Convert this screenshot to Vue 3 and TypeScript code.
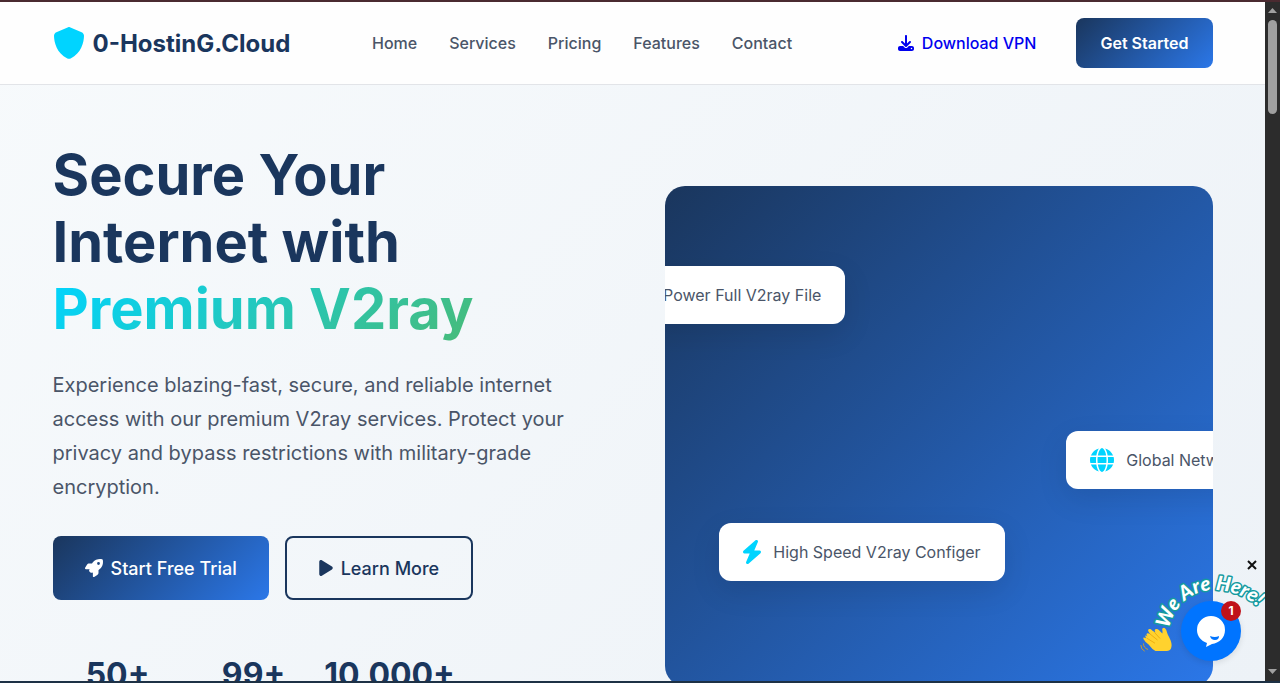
<script setup lang="ts">
interface NavLink {
  label: string
  href: string
}

const links: NavLink[] = [
  { label: 'Home', href: '#home' },
  { label: 'Services', href: '#services' },
  { label: 'Pricing', href: '#pricing' },
  { label: 'Features', href: '#features' },
  { label: 'Contact', href: '#contact' },
]

const stats: string[] = ['50+', '99+', '10,000+']
</script>

<template>
  <div class="window">
    <div class="edge edge-top"></div>
    <div class="viewport">
      <div class="page">
        <header class="header">
          <div class="container header-row">
            <a class="logo" href="#home">
              <svg class="logo-icon" viewBox="0 0 512 512" aria-hidden="true">
                <path d="M256 0c4.6 0 9.2 1 13.4 2.9L457.7 82.8c22 9.3 38.4 31 38.3 57.2c-.5 99.2-41.3 280.7-213.6 363.2c-16.7 8-36.1 8-52.8 0C57.3 420.7 16.5 239.2 16 140c-.1-26.2 16.3-47.9 38.3-57.2L242.7 2.9C246.8 1 251.4 0 256 0z" />
              </svg>
              <span>0-HostinG.Cloud</span>
            </a>
            <nav class="nav">
              <a v-for="link in links" :key="link.label" :href="link.href">{{ link.label }}</a>
            </nav>
            <div class="actions">
              <a class="download" href="#download">
                <svg viewBox="0 0 512 512" aria-hidden="true">
                  <path d="M288 32c0-17.7-14.3-32-32-32s-32 14.3-32 32V274.7l-73.4-73.4c-12.5-12.5-32.8-12.5-45.3 0s-12.5 32.8 0 45.3l128 128c12.5 12.5 32.8 12.5 45.3 0l128-128c12.5-12.5 12.5-32.8 0-45.3s-32.8-12.5-45.3 0L288 274.7V32zM64 352c-35.3 0-64 28.7-64 64v32c0 35.3 28.7 64 64 64H448c35.3 0 64-28.7 64-64V416c0-35.3-28.7-64-64-64H346.5l-45.3 45.3c-25 25-65.5 25-90.5 0L165.5 352H64zm368 56a24 24 0 1 1 0 48 24 24 0 1 1 0-48z" />
                </svg>
                <span>Download VPN</span>
              </a>
              <button class="get-started" type="button">Get Started</button>
            </div>
          </div>
        </header>

        <main class="hero">
          <div class="container hero-grid">
            <section class="copy">
              <h1>Secure Your Internet with <span class="highlight">Premium V2ray</span></h1>
              <p>
                Experience blazing-fast, secure, and reliable internet access with our premium V2ray
                services. Protect your privacy and bypass restrictions with military-grade encryption.
              </p>
              <div class="buttons">
                <button class="cta primary" type="button">
                  <svg class="rocket" viewBox="0 0 512 512" aria-hidden="true">
                    <path d="M156.6 384.9L125.7 354c-8.5-8.5-11.5-20.8-7.7-32.2c3-8.9 7-20.5 11.8-33.8L24 288c-8.6 0-16.6-4.6-20.9-12.1s-4.2-16.7 .2-24.1l52.5-88.5c13-21.9 36.5-35.3 61.9-35.3l82.3 0c2.4-4 4.8-7.7 7.2-11.3C289.1-4.1 411.1-8.1 483.9 5.3c11.6 2.1 20.6 11.2 22.8 22.8c13.4 72.9 9.3 194.8-111.4 276.7c-3.5 2.4-7.3 4.8-11.3 7.2v82.3c0 25.4-13.4 49-35.3 61.9l-88.5 52.5c-7.4 4.4-16.6 4.5-24.1 .2s-12.1-12.2-12.1-20.9V380.8c-14.1 4.9-26.4 8.9-35.7 11.9c-11.2 3.6-23.4 .5-31.8-7.8zM384 168a40 40 0 1 0 0-80 40 40 0 1 0 0 80z" />
                  </svg>
                  <span>Start Free Trial</span>
                </button>
                <button class="cta outline" type="button">
                  <svg class="play" viewBox="0 0 384 512" aria-hidden="true">
                    <path d="M73 39c-14.8-9.1-33.4-9.4-48.5-.9S0 62.6 0 80V432c0 17.4 9.4 33.4 24.5 41.9s33.7 8.1 48.5-.9L361 297c14.3-8.7 23-24.2 23-41s-8.7-32.2-23-41L73 39z" />
                  </svg>
                  <span>Learn More</span>
                </button>
              </div>
              <div class="stats">
                <strong v-for="value in stats" :key="value">{{ value }}</strong>
              </div>
            </section>

            <section class="visual">
              <div class="card card-file">Power Full V2ray File</div>
              <div class="card card-network">
                <svg class="globe" viewBox="0 0 512 512" aria-hidden="true">
                  <path d="M352 256c0 22.2-1.2 43.6-3.3 64H163.3c-2.2-20.4-3.3-41.8-3.3-64s1.2-43.6 3.3-64H348.7c2.2 20.4 3.3 41.8 3.3 64zm28.8-64H503.9c5.3 20.5 8.1 41.9 8.1 64s-2.8 43.5-8.1 64H380.8c2.1-20.6 3.2-42 3.2-64s-1.1-43.4-3.2-64zm112.6-32H376.7c-10-63.9-29.8-117.4-55.3-151.6c78.3 20.7 142 77.5 171.9 151.6zm-149.1 0H167.7c6.1-36.4 15.5-68.6 27-94.7c10.5-23.6 22.2-40.7 33.5-51.5C239.4 3.2 248.7 0 256 0s16.6 3.2 27.8 13.8c11.3 10.8 23 27.9 33.5 51.5c11.6 26 20.9 58.2 27 94.7zm-209 0H18.6C48.6 85.9 112.2 29.1 190.6 8.4C165.1 42.6 145.3 96.1 135.3 160zM8.1 192H131.2c-2.1 20.6-3.2 42-3.2 64s1.1 43.4 3.2 64H8.1C2.8 299.5 0 278.1 0 256s2.8-43.5 8.1-64zM194.7 446.6c-11.6-26-20.9-58.2-27-94.6H344.3c-6.1 36.4-15.5 68.6-27 94.6c-10.5 23.6-22.2 40.7-33.5 51.5C272.6 508.8 263.3 512 256 512s-16.6-3.2-27.8-13.8c-11.3-10.8-23-27.9-33.5-51.5zM135.3 352c10 63.9 29.8 117.4 55.3 151.6C112.2 482.9 48.6 426.1 18.6 352H135.3zm358.1 0c-30 74.1-93.6 130.9-171.9 151.6c25.5-34.2 45.2-87.7 55.3-151.6H493.4z" />
                </svg>
                <span>Global Network</span>
              </div>
              <div class="card card-speed">
                <svg class="bolt" viewBox="32 0 384 512" aria-hidden="true">
                  <path d="M349.4 44.6c5.9-13.7 1.5-29.7-10.6-38.5s-28.6-8-39.9 1.8l-256 224c-10 8.8-13.6 22.9-8.9 35.3S50.7 288 64 288H175.5L98.6 467.4c-5.9 13.7-1.5 29.7 10.6 38.5s28.6 8 39.9-1.8l256-224c10-8.8 13.6-22.9 8.9-35.3s-16.6-20.7-30-20.7H272.5L349.4 44.6z" />
                </svg>
                <span>High Speed V2ray Configer</span>
              </div>
            </section>
          </div>
        </main>

        <aside class="chat">
          <svg class="greeting" viewBox="0 0 128 112" role="img" aria-label="We Are Here!">
            <defs>
              <path id="greeting-arc" d="M32 73 C36 50 56 34 76 34 C98 34 114 43 128 58" />
            </defs>
            <text><textPath href="#greeting-arc">We Are Here!</textPath></text>
            <g class="hand" transform="translate(3 19) scale(0.86 0.8)">
              <path d="M9 77C6 74 8 71 12 74L10 71C8 67 12 66 15 70L18 72C15 67 20 66 23 70L26 73C27 69 24 67 28 66C31 67 31 72 33 76C36 82 38 87 36 92Q35 95 31 95H18Q14 93 10 87Q6 84 4 80Q3 77 7 79L6 76Q6 75 9 77Z" />
              <path class="finger" d="M12 74L20 81M17 72L23 79M8 79L17 85" />
              <path class="motion" d="M1 88Q1 93 5 95M4 86Q4 91 9 93" />
            </g>
          </svg>
          <button class="close" type="button" aria-label="Close">
            <svg viewBox="0 0 10 10" aria-hidden="true"><path d="M1 1L9 9M9 1L1 9" /></svg>
          </button>
          <button class="bubble" type="button" aria-label="Open chat">
            <svg viewBox="0 0 60 60" aria-hidden="true">
              <path d="M30 15a14 14 0 0 1 14 14c0 8-6 13-13 14l-6 3 1-4C20 40 16 35 16 29A14 14 0 0 1 30 15z" fill="#fff" />
              <path d="M29 35Q34 37 38 35Q38 39 34 39Q30 39 29 35Z" fill="#0074ff" />
            </svg>
          </button>
          <span class="badge">1</span>
        </aside>
      </div>

      <div class="scrollbar" aria-hidden="true">
        <svg viewBox="0 0 9 5"><path d="M4.500 0L9 5H0Z" /></svg>
        <div class="thumb"></div>
        <svg class="down" viewBox="0 0 9 5"><path d="M0 0H9L4.500 5Z" /></svg>
      </div>
    </div>
    <div class="edge edge-bottom"></div>
  </div>
</template>

<style>
body {
  margin: 0;
}
</style>

<style scoped>
.window {
  display: flex;
  flex-direction: column;
  height: 100vh;
  overflow: hidden;
  font-family: Inter, "Liberation Sans", sans-serif;
  color: #4a5568;
}

.window *,
.window *::before {
  box-sizing: border-box;
}

.edge {
  flex: 0 0 2px;
}

.edge-top {
  background: #4a2a30;
}

.edge-bottom {
  background: #1d3145;
}

.viewport {
  display: flex;
  flex: 1;
  min-height: 0;
}

.page {
  position: relative;
  flex: 1;
  min-width: 0;
  overflow: hidden;
  background: linear-gradient(135deg, #f7fafc 0%, #edf2f7 100%);
}

.container {
  max-width: 1200px;
  margin: 0 auto;
  padding: 0 20px;
}

a {
  text-decoration: none;
}

button {
  padding: 0;
  border: 0;
  font-family: inherit;
  cursor: pointer;
}

svg {
  display: block;
  flex: none;
  fill: currentColor;
}

.header {
  padding: 16px 0;
  background: #fefefe;
  border-bottom: 1px solid #e2e4e8;
}

.header-row {
  display: flex;
  align-items: center;
  justify-content: space-between;
}

.logo {
  display: flex;
  align-items: center;
  gap: 8px;
  font-size: 24px;
  font-weight: 700;
  color: #1a365d;
}

.logo-icon {
  width: 32px;
  height: 32px;
  color: #00d4ff;
}

.nav {
  display: flex;
  gap: 32px;
  font-size: 16px;
  font-weight: 500;
}

.nav a {
  color: #4a5568;
}

.actions {
  display: flex;
  align-items: center;
  gap: 16px;
  font-size: 16px;
}

.download {
  display: flex;
  align-items: center;
  gap: 8px;
  padding: 12px 24px;
  font-weight: 500;
  color: #0000ee;
}

.download svg {
  width: 16px;
  height: 16px;
}

.get-started {
  height: 50px;
  padding: 0 24px;
  border-radius: 8px;
  background: linear-gradient(135deg, #1a365d 0%, #2b77e8 100%);
  color: #fff;
  font-size: 16px;
  font-weight: 600;
}

.hero {
  padding: 57px 0;
}

.hero-grid {
  display: grid;
  grid-template-columns: 1fr 1fr;
  gap: 64px;
}

h1 {
  margin: 0 0 25px;
  font-size: 56px;
  font-weight: 700;
  line-height: 67px;
  color: #1a365d;
}

.highlight {
  background: linear-gradient(135deg, #00d4ff 0%, #48bb78 100%);
  background-clip: text;
  -webkit-background-clip: text;
  color: transparent;
}

p {
  margin: 0 0 32px;
  font-size: 20px;
  line-height: 34px;
}

.buttons {
  display: flex;
  gap: 16px;
  margin-bottom: 49px;
}

.cta {
  display: flex;
  align-items: center;
  gap: 8px;
  height: 64px;
  padding: 0 32px;
  border-radius: 8px;
  font-size: 18px;
  font-weight: 500;
}

.primary {
  background: linear-gradient(135deg, #1a365d 0%, #2b77e8 100%);
  color: #fff;
}

.outline {
  border: 2px solid #1a365d;
  background: transparent;
  color: #1a365d;
}

.rocket {
  width: 18px;
  height: 18px;
}

.play {
  width: 14px;
  height: 18px;
}

.stats {
  display: grid;
  grid-template-columns: repeat(3, 130px);
  gap: 6px;
  justify-items: center;
  font-size: 32px;
  line-height: 51px;
  color: #1a365d;
}

.visual {
  position: relative;
  height: 500px;
  margin-top: 44px;
  border-radius: 20px;
  overflow: hidden;
  background: linear-gradient(135deg, #1a365d 0%, #2b77e8 100%);
}

.card {
  position: absolute;
  display: flex;
  align-items: center;
  gap: 12px;
  height: 58px;
  padding: 0 24px;
  border-radius: 12px;
  background: #fff;
  box-shadow: 0 10px 30px rgba(0, 0, 0, 0.1);
  font-size: 16px;
  white-space: nowrap;
}

.card svg {
  color: #00d4ff;
}

.card-file {
  top: 80px;
  right: 67%;
}

.card-network {
  top: 245px;
  right: -10%;
}

.card-speed {
  top: 337px;
  left: 10%;
}

.globe {
  width: 24px;
  height: 24px;
}

.bolt {
  width: 18px;
  height: 24px;
}

.chat {
  position: absolute;
  right: 0;
  bottom: 13px;
  width: 128px;
  height: 112px;
}

.greeting {
  width: 128px;
  height: 112px;
  overflow: visible;
}

.greeting text {
  font-family: Lato, "Open Sans", sans-serif;
  font-size: 20px;
  font-style: italic;
  font-weight: 900;
  fill: #fff;
  stroke: #159a9f;
  stroke-width: 3px;
  stroke-linejoin: round;
  paint-order: stroke;
}

.hand {
  fill: #ffd22e;
}

.finger,
.motion {
  fill: none;
  stroke: #e8a70c;
  stroke-width: 1px;
  stroke-linecap: round;
}

.close {
  position: absolute;
  top: 4px;
  right: 8px;
  background: transparent;
  color: #111;
}

.close svg {
  width: 10px;
  height: 10px;
  stroke: currentColor;
  stroke-width: 2px;
}

.bubble {
  position: absolute;
  right: 24px;
  bottom: 7px;
  width: 60px;
  height: 60px;
  border-radius: 50%;
  background: #0074ff;
  box-shadow: 0 2px 6px rgba(0, 0, 0, 0.1);
}

.badge {
  position: absolute;
  right: 24px;
  bottom: 47px;
  width: 20px;
  height: 20px;
  border-radius: 50%;
  background: #c0121a;
  color: #fff;
  font-size: 12px;
  font-weight: 700;
  line-height: 20px;
  text-align: center;
}

.scrollbar {
  display: flex;
  flex: 0 0 15px;
  flex-direction: column;
  align-items: center;
  padding: 6px 0 7px;
  background: #2c2c2c;
  color: #a0a0a0;
}

.scrollbar svg {
  width: 9px;
  height: 5px;
}

.thumb {
  width: 9px;
  height: 94px;
  margin: 7px 0 auto;
  border-radius: 5px;
  background: #a0a0a0;
}
</style>
